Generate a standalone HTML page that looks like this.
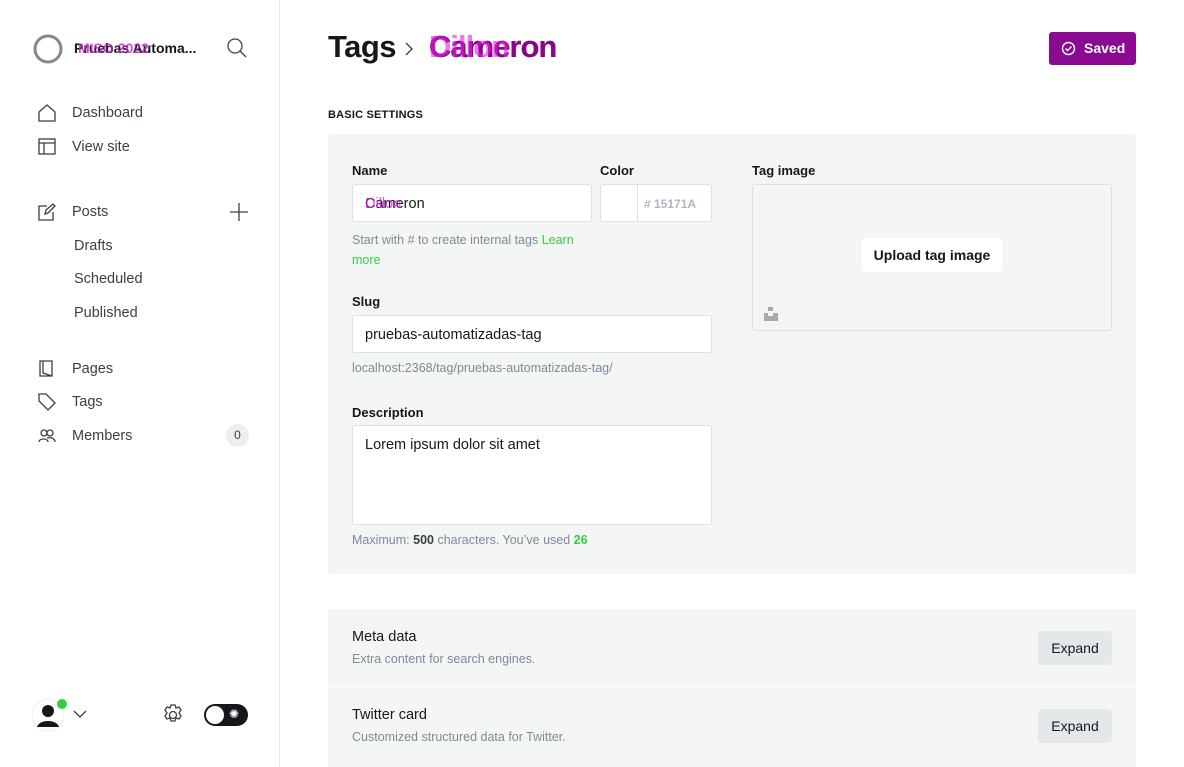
<!DOCTYPE html>
<html><head><meta charset="utf-8"><style>
*{box-sizing:border-box;margin:0;padding:0}
body{width:1184px;height:767px;overflow:hidden;background:#fff;font-family:"Liberation Sans",sans-serif;color:#15171a;position:relative}
.a{position:absolute}
.sb{left:0;top:0;width:280px;height:767px;border-right:1px solid #e6e9eb}
.nav{font-size:14.5px;color:#394047}
.ic{stroke:#394047;fill:none;stroke-width:1.3}
.lbl{font-size:13px;font-weight:bold;color:#15171a}
.inp{background:#fff;border:1px solid #dde1e5;border-radius:3px}
.hint{font-size:12.5px;color:#7c8b9a}
.btn{background:#e5e8eb;border-radius:4px;font-size:14px;color:#15171a;text-align:center;line-height:34px}
</style></head><body>
<div class="a sb"></div>
<svg class="a" style="left:32px;top:33px" width="32" height="32"><circle cx="16" cy="16" r="13" fill="none" stroke="#888" stroke-width="3"/></svg>
<div class="a" style="left:74px;top:40px;font-size:14px;font-weight:bold;color:#15171a">Pruebas Automa...</div>
<div class="a" style="left:78px;top:40px;font-size:14px;font-weight:bold;color:#c020c0;opacity:.8">MISO 2022</div>
<svg class="a" style="left:226px;top:37px" width="22" height="22"><circle cx="9" cy="9" r="7" class="ic" stroke-width="1.6"/><path d="M14 14l6 6" class="ic" stroke-width="1.6"/></svg>

<svg class="a" style="left:38px;top:104px" width="18" height="18"><path d="M1 8L9 1l8 7v9H1z" class="ic"/></svg>
<div class="a nav" style="left:72px;top:105px">Dashboard</div>
<svg class="a" style="left:38px;top:138px" width="18" height="18"><rect x="1" y="1" width="16" height="15" class="ic"/><path d="M1 5h16M6 5v11" class="ic"/></svg>
<div class="a nav" style="left:72px;top:139px">View site</div>
<svg class="a" style="left:38px;top:203px" width="18" height="18"><path d="M9 3H1v14h14V9M7 11l1-4 7-6 2 2-7 7z" class="ic"/></svg>
<div class="a nav" style="left:72px;top:204px">Posts</div>
<svg class="a" style="left:229px;top:202px" width="20" height="20"><path d="M10 1v18M1 10h18" class="ic"/></svg>
<div class="a nav" style="left:74px;top:238px">Drafts</div>
<div class="a nav" style="left:74px;top:271px">Scheduled</div>
<div class="a nav" style="left:74px;top:305px">Published</div>
<svg class="a" style="left:38px;top:360px" width="18" height="18"><path d="M2 1h12v15H2zM5 1v12l9 3" class="ic"/></svg>
<div class="a nav" style="left:72px;top:361px">Pages</div>
<svg class="a" style="left:38px;top:393px" width="18" height="18"><path d="M1 1h7l9 9-7 7-9-9z" class="ic"/></svg>
<div class="a nav" style="left:72px;top:394px">Tags</div>
<svg class="a" style="left:38px;top:428px" width="18" height="16"><circle cx="6" cy="5" r="3" class="ic"/><circle cx="12" cy="5" r="3" class="ic"/><path d="M1 14c0-4 9-4 9 0M9 10c3-1 8 0 8 4" class="ic"/></svg>
<div class="a nav" style="left:72px;top:428px">Members</div>
<div class="a" style="left:226px;top:424px;width:23px;height:23px;border-radius:12px;background:#eceef0;font-size:12px;color:#394047;text-align:center;line-height:23px">0</div>

<svg class="a" style="left:32px;top:698px" width="36" height="36"><circle cx="16" cy="17" r="16" fill="#fff" stroke="#eee"/><circle cx="16" cy="13" r="6" fill="#15171a"/><path d="M5 29c2-8 20-8 22 0z" fill="#15171a"/><circle cx="30" cy="6" r="5" fill="#30cf43"/></svg>
<svg class="a" style="left:73px;top:709px" width="14" height="10"><path d="M1 2l6 6 6-6" class="ic"/></svg>
<svg class="a" style="left:162px;top:704px" width="22" height="22"><circle cx="11" cy="11" r="3.5" class="ic"/><path d="M9 1h4l1 3 3-1 2 3-2 3 2 3-2 3-3-1-1 3H9l-1-3-3 1-2-3 2-3-2-3 2-3 3 1z" class="ic"/></svg>
<div class="a" style="left:204px;top:704px;width:44px;height:22px;border-radius:11px;background:#15171a"></div>
<div class="a" style="left:206px;top:706px;width:18px;height:18px;border-radius:9px;background:#fff"></div>
<div class="a" style="left:229px;top:707px;color:#fff;font-size:12px">✺</div>

<div class="a" style="left:328px;top:29px;font-size:31px;font-weight:bold;letter-spacing:-.5px">Tags</div>
<svg class="a" style="left:404px;top:41px" width="12" height="16"><path d="M2 2l6 6-6 6" class="ic" stroke-width="1.6"/></svg>
<div class="a" style="left:429px;top:29px;font-size:31px;font-weight:bold;letter-spacing:-1px;color:#15171a">Cameron</div>
<div class="a" style="left:429px;top:29px;font-size:31px;font-weight:bold;letter-spacing:-1px;color:#a000a0;opacity:.85">Cameron</div>
<div class="a" style="left:429px;top:29px;font-size:31px;font-weight:bold;letter-spacing:-1px;color:#e020e0;opacity:.6">Dillon</div>
<div class="a" style="left:1049px;top:32px;width:87px;height:33px;background:#8a0a92;border-radius:3px;color:#fff;font-size:14px;font-weight:bold;line-height:33px;padding-left:35px">Saved</div>
<svg class="a" style="left:1061px;top:41px" width="15" height="15"><circle cx="7.5" cy="7.5" r="6" fill="none" stroke="#fff" stroke-width="1.4"/><path d="M4.5 7.5l2 2 4-4" fill="none" stroke="#fff" stroke-width="1.4"/></svg>

<div class="a" style="left:328px;top:109px;font-size:11px;font-weight:bold;color:#15171a;letter-spacing:.2px">BASIC SETTINGS</div>
<div class="a" style="left:328px;top:134px;width:808px;height:440px;background:#f4f5f5;border-radius:3px"></div>
<div class="a lbl" style="left:352px;top:163px">Name</div>
<div class="a inp" style="left:352px;top:184px;width:240px;height:38px"></div>
<div class="a" style="left:365px;top:196px;font-size:14.5px;color:#15171a">Cameron</div>
<div class="a" style="left:365px;top:196px;font-size:14.5px;color:#e020e0;opacity:.8">Dillon</div>
<div class="a hint" style="left:352px;top:230px;line-height:20px;width:240px">Start with # to create internal tags <span style="color:#30cf43">Learn more</span></div>
<div class="a lbl" style="left:600px;top:163px">Color</div>
<div class="a inp" style="left:600px;top:184px;width:112px;height:38px"></div>
<div class="a" style="left:637px;top:185px;width:1px;height:36px;background:#dde1e5"></div>
<div class="a" style="left:644px;top:197px;font-size:12px;font-weight:bold;color:#aeb7c1">#&nbsp;15171A</div>
<div class="a lbl" style="left:752px;top:163px">Tag image</div>
<div class="a" style="left:752px;top:184px;width:360px;height:147px;border:1px solid #dde1e5;border-radius:3px"></div>
<div class="a" style="left:862px;top:238px;width:140px;height:34px;background:#fff;border-radius:3px;font-size:14px;font-weight:bold;color:#15171a;text-align:center;line-height:34px">Upload tag image</div>
<div class="a" style="left:764px;top:313px;width:14px;height:8px;background:#aaa"></div>
<div class="a" style="left:768px;top:307px;width:5px;height:4px;background:#aaa"></div>
<div class="a" style="left:768px;top:313px;width:5px;height:3px;background:#f4f5f5"></div>
<div class="a lbl" style="left:352px;top:294px">Slug</div>
<div class="a inp" style="left:352px;top:315px;width:360px;height:38px"></div>
<div class="a" style="left:365px;top:327px;font-size:14.5px">pruebas-automatizadas-tag</div>
<div class="a hint" style="left:352px;top:361px">localhost:2368/tag/pruebas-automatizadas-tag/</div>
<div class="a lbl" style="left:352px;top:405px">Description</div>
<div class="a inp" style="left:352px;top:425px;width:360px;height:100px"></div>
<div class="a" style="left:365px;top:437px;font-size:14.5px">Lorem ipsum dolor sit amet</div>
<div class="a hint" style="left:352px;top:533px">Maximum: <b style="color:#394047">500</b> characters. You’ve used <b style="color:#30cf43">26</b></div>

<div class="a" style="left:328px;top:609px;width:808px;height:77px;background:#f4f5f5;border-radius:3px 3px 0 0"></div>
<div class="a" style="left:328px;top:687px;width:808px;height:80px;background:#f4f5f5"></div>
<div class="a" style="left:352px;top:629px;font-size:14.5px">Meta data</div>
<div class="a hint" style="left:352px;top:652px">Extra content for search engines.</div>
<div class="a btn" style="left:1038px;top:631px;width:74px">Expand</div>
<div class="a" style="left:352px;top:707px;font-size:14.5px">Twitter card</div>
<div class="a hint" style="left:352px;top:730px">Customized structured data for Twitter.</div>
<div class="a btn" style="left:1038px;top:709px;width:74px">Expand</div>
</body></html>
